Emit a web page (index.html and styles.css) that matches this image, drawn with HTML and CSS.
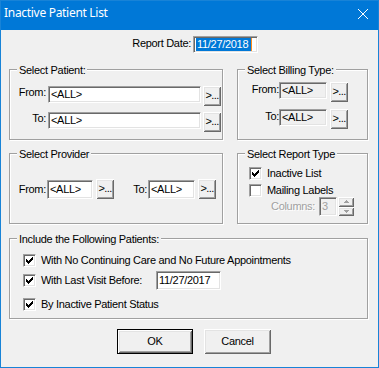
FILE: index.html
```html
<!DOCTYPE html>
<html lang="en">
<head>
  <meta charset="UTF-8">
  <title>Inactive Patient List</title>
  <link rel="stylesheet" href="styles.css">
</head>
<body>
  <div class="window">
    <div class="titlebar">
      <span class="title">Inactive Patient List</span>
      <svg class="close" width="10" height="10" viewBox="0 0 10 10"><path d="M0 0L10 10M10 0L0 10" stroke="#fff" stroke-width="1"/></svg>
    </div>

    <div class="client">
      <div class="report-row">
        <span class="report-label">Report Date:</span>
        <div class="edit date-edit"><span class="sel">11/27/2018</span></div>
      </div>

      <div class="group-row first">
        <div class="group patient">
          <div class="caption">Select Patient:</div>
          <div class="range patient-range">
            <span class="lbl">From:</span><div class="edit">&lt;ALL&gt;</div><button class="btn dots">&gt;...</button>
            <span class="lbl">To:</span><div class="edit">&lt;ALL&gt;</div><button class="btn dots">&gt;...</button>
          </div>
        </div>
        <div class="group billing">
          <div class="caption">Select Billing Type:</div>
          <div class="range billing-range">
            <span class="lbl">From:</span><div class="edit readonly">&lt;ALL&gt;</div><button class="btn dots">&gt;...</button>
            <span class="lbl">To:</span><div class="edit readonly">&lt;ALL&gt;</div><button class="btn dots">&gt;...</button>
          </div>
        </div>
      </div>

      <div class="group-row second">
        <div class="group provider">
          <div class="caption">Select Provider</div>
          <div class="provider-row">
            <span class="lbl from">From:</span><div class="edit">&lt;ALL&gt;</div><button class="btn dots">&gt;...</button>
            <span class="lbl to">To:</span><div class="edit">&lt;ALL&gt;</div><button class="btn dots">&gt;...</button>
          </div>
        </div>
        <div class="group report-type">
          <div class="caption">Select Report Type</div>
          <div class="check-row r1">
            <span class="cb"><svg width="9" height="9" viewBox="0 0 9 9"><path d="M1 3h1v3h-1zM2 4h1v3h-1zM3 5h1v3h-1zM4 4h1v3h-1zM5 3h1v3h-1zM6 2h1v3h-1zM7 1h1v3h-1z" fill="#000"/></svg></span>
            <span>Inactive List</span>
          </div>
          <div class="check-row r2">
            <span class="cb"></span>
            <span>Mailing Labels</span>
          </div>
          <div class="columns-row">
            <span class="disabled">Columns:</span>
            <div class="edit readonly cols">3</div>
            <div class="spin">
              <div class="spin-btn"><svg width="5" height="3" viewBox="0 0 5 3"><path d="M2 0h1v1h1v1h1v1h-5v-1h1v-1h1z" fill="#a0a0a0"/></svg></div>
              <div class="spin-btn"><svg width="5" height="3" viewBox="0 0 5 3"><path d="M0 0h5v1h-1v1h-1v1h-1v-1h-1v-1h-1z" fill="#a0a0a0"/></svg></div>
            </div>
          </div>
        </div>
      </div>

      <div class="group include">
        <div class="caption">Include the Following Patients:</div>
        <div class="check-row i1">
          <span class="cb"><svg width="9" height="9" viewBox="0 0 9 9"><path d="M1 3h1v3h-1zM2 4h1v3h-1zM3 5h1v3h-1zM4 4h1v3h-1zM5 3h1v3h-1zM6 2h1v3h-1zM7 1h1v3h-1z" fill="#000"/></svg></span>
          <span>With No Continuing Care and No Future Appointments</span>
        </div>
        <div class="check-row i2">
          <span class="cb"><svg width="9" height="9" viewBox="0 0 9 9"><path d="M1 3h1v3h-1zM2 4h1v3h-1zM3 5h1v3h-1zM4 4h1v3h-1zM5 3h1v3h-1zM6 2h1v3h-1zM7 1h1v3h-1z" fill="#000"/></svg></span>
          <span class="visit-label">With Last Visit Before:</span>
          <div class="edit visit-edit">11/27/2017</div>
        </div>
        <div class="check-row i3">
          <span class="cb"><svg width="9" height="9" viewBox="0 0 9 9"><path d="M1 3h1v3h-1zM2 4h1v3h-1zM3 5h1v3h-1zM4 4h1v3h-1zM5 3h1v3h-1zM6 2h1v3h-1zM7 1h1v3h-1z" fill="#000"/></svg></span>
          <span>By Inactive Patient Status</span>
        </div>
      </div>

      <div class="buttons">
        <button class="btn push default">OK</button>
        <button class="btn push cancel">Cancel</button>
      </div>
    </div>
  </div>
</body>
</html>
```

FILE: styles.css
```css
* { box-sizing: border-box; }
body { margin: 0; font-family: "Liberation Sans", Arial, sans-serif; font-size: 11px; line-height: 13px; letter-spacing: -0.3px; color: #000; }

.window { width: 379px; height: 368px; border: 1px solid #1883d7; background: #f0f0f0; }
.titlebar { height: 29px; background: #0078d7; color: #fff; display: flex; align-items: flex-start; padding-left: 3px; }
.title { flex: 1; margin-top: 4px; font-family: "Noto Sans", sans-serif; font-size: 12px; line-height: 16px; letter-spacing: -0.3px; }
.close { margin: 8px 10px 0 0; }

.client { padding-left: 8px; }

.report-row { display: flex; margin-top: 6px; height: 19px; }
.report-label { width: 182px; margin-right: 2px; padding-top: 1px; text-align: right; }
.date-edit { width: 65px; height: 19px; padding: 1px 0 0 1px; }
.sel { display: inline-block; background: #0078d7; color: #fff; padding: 0 3px 0 1px; border-right: 1px solid #ff8c1a; }

/* sunken edit box */
.edit { height: 17px; border: 1px solid; border-color: #a0a0a0 #fff #fff #a0a0a0; box-shadow: inset 1px 1px #696969, inset -1px -1px #e3e3e3; background: #fff; padding: 1px 2px 0; white-space: nowrap; overflow: hidden; }
.edit.readonly { background: #f0f0f0; }

/* raised button */
.btn { font: inherit; letter-spacing: inherit; color: #000; margin: 0; padding: 0; border: none; background: #f0f0f0; box-shadow: inset 1px 1px #fff, inset -1px -1px #696969, inset 2px 2px #e3e3e3, inset -2px -2px #a0a0a0; }
.dots { width: 18px; height: 20px; padding-bottom: 2px; letter-spacing: -0.6px; }

/* etched group box */
.group { border: 1px solid #a0a0a0; box-shadow: inset 1px 1px #fff, 1px 1px #fff; }
.caption { display: table; margin: -6px 0 0 7px; padding: 0 2px; background: #f0f0f0; }

.group-row { display: flex; gap: 14px; }
.group-row.first { margin-top: 14px; }
.group-row.second { margin-top: 13px; }
.group-row .group { height: 71px; }
.patient, .provider { width: 214px; }
.billing, .report-type { width: 131px; }

.range { display: grid; align-items: start; }
.lbl { text-align: right; }
.patient-range { grid-template-columns: 36px 153px 18px; column-gap: 2px; row-gap: 6px; margin-top: 9px; }
.billing-range { grid-template-columns: 41px 51px 18px; row-gap: 7px; margin-top: 5px; }
.billing-range .lbl { padding-top: 1px; }
.billing-range .edit { width: 48px; }

.provider-row { display: flex; align-items: center; margin-top: 18px; }
.provider-row .edit { height: 19px; padding-top: 2px; }
.provider-row .lbl.from { width: 36px; }
.provider-row .lbl.to { width: 33px; }
.provider-row .edit { width: 46px; margin-left: 1px; }
.provider-row .edit:nth-of-type(2) { width: 47px; }
.provider-row .btn { margin-left: 3px; }

.check-row { display: flex; align-items: center; height: 13px; }
.cb { flex: none; width: 13px; height: 13px; margin-right: 5px; border: 1px solid; border-color: #a0a0a0 #fff #fff #a0a0a0; box-shadow: inset 1px 1px #696969, inset -1px -1px #e3e3e3; background: #fff; }
.cb svg { display: block; margin: 1px; }

.report-type .check-row { padding-left: 11px; }
.check-row.r1 { margin-top: 6px; }
.check-row.r2 { margin-top: 4px; }
.columns-row { display: flex; align-items: center; height: 19px; padding-left: 33px; }
.disabled { color: #a0a0a0; text-shadow: 1px 1px #fff; }
.cols { width: 18px; height: 19px; margin-left: 4px; padding-top: 2px; color: #a0a0a0; }
.spin { display: flex; flex-direction: column; width: 16px; height: 19px; margin-left: 1px; }
.spin-btn { flex: 1; display: flex; align-items: center; justify-content: center; background: #f0f0f0; box-shadow: inset 1px 1px #fff, inset -1px -1px #696969, inset 2px 2px #e3e3e3, inset -2px -2px #a0a0a0; }
.spin-btn svg { display: block; }

.include { height: 81px; margin-top: 14px; width: 359px; }
.include .check-row { padding-left: 13px; }
.check-row.i1 { margin-top: 8px; }
.check-row.i2 { margin-top: 4px; height: 19px; }
.check-row.i3 { margin-top: 8px; }
.visit-label { width: 115px; }
.visit-edit { width: 65px; height: 19px; padding-top: 2px; }

.buttons { display: flex; margin-top: 10px; padding-left: 108px; }
.push { height: 25px; }
.default { width: 76px; border: 1px solid #000; }
.cancel { width: 67px; margin-left: 11px; }
```
